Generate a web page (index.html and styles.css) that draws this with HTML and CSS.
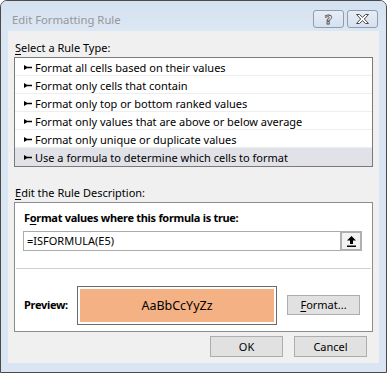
FILE: index.html
```html
<!DOCTYPE html>
<html>
<head>
<meta charset="utf-8">
<link rel="stylesheet" href="styles.css">
</head>
<body>
<div class="window">
  <div class="titlebar">
    <span class="title">Edit Formatting Rule</span>
    <div class="tbtns">
      <div class="tbtn"><span class="qmark">?</span></div>
      <div class="tbtn">
        <svg width="13" height="10" viewBox="0 0 13 10"><polygon points="0.5,0.5 3.5,0.5 6.5,3.3 9.5,0.5 12.5,0.5 8.3,5 12.5,9.5 9.5,9.5 6.5,6.7 3.5,9.5 0.5,9.5 4.7,5" fill="#fff" stroke="#4a4a4a" stroke-width="1" stroke-linejoin="round"/></svg>
      </div>
    </div>
  </div>
  <div class="client">
    <div class="label"><u>S</u>elect a Rule Type:</div>
    <div class="listbox">
      <div class="row"><svg class="arrow" width="8" height="5" viewBox="0 0 8 5"><polygon points="0,0 3,1.8 8,1.8 8,3.2 3,3.2 0,5" fill="#000"/></svg><span>Format all cells based on their values</span></div>
      <div class="row"><svg class="arrow" width="8" height="5" viewBox="0 0 8 5"><polygon points="0,0 3,1.8 8,1.8 8,3.2 3,3.2 0,5" fill="#000"/></svg><span>Format only cells that contain</span></div>
      <div class="row"><svg class="arrow" width="8" height="5" viewBox="0 0 8 5"><polygon points="0,0 3,1.8 8,1.8 8,3.2 3,3.2 0,5" fill="#000"/></svg><span>Format only top or bottom ranked values</span></div>
      <div class="row"><svg class="arrow" width="8" height="5" viewBox="0 0 8 5"><polygon points="0,0 3,1.8 8,1.8 8,3.2 3,3.2 0,5" fill="#000"/></svg><span>Format only values that are above or below average</span></div>
      <div class="row"><svg class="arrow" width="8" height="5" viewBox="0 0 8 5"><polygon points="0,0 3,1.8 8,1.8 8,3.2 3,3.2 0,5" fill="#000"/></svg><span>Format only unique or duplicate values</span></div>
      <div class="row sel"><svg class="arrow" width="8" height="5" viewBox="0 0 8 5"><polygon points="0,0 3,1.8 8,1.8 8,3.2 3,3.2 0,5" fill="#000"/></svg><span>Use a formula to determine which cells to format</span></div>
    </div>
    <div class="label l2"><u>E</u>dit the Rule Description:</div>
    <div class="desc">
      <div class="blabel">F<u>o</u>rmat values where this formula is true:</div>
      <div class="inputrow">
        <div class="input">=ISFORMULA(E5)</div>
        <div class="upbtn">
          <svg width="9" height="11" viewBox="0 0 9 11"><path d="M4.5 0 L9 4.5 H6 V8 H3 V4.5 H0 Z" fill="#000"/><rect x="0" y="9.5" width="9" height="1.5" fill="#000"/></svg>
        </div>
      </div>
      <div class="sep"></div>
      <div class="prow">
        <div class="blabel plabel">Preview:</div>
        <div class="preview"><div class="swatch">AaBbCcYyZz</div></div>
        <div class="btn fmt"><u>F</u>ormat...</div>
      </div>
    </div>
    <div class="footer">
      <div class="btn">OK</div>
      <div class="btn">Cancel</div>
    </div>
  </div>
</div>
</body>
</html>
```
FILE: styles.css
```css
* { box-sizing: border-box; }
html, body { margin: 0; padding: 0; background: #fff; }
body {
  font-family: "Noto Sans", "Open Sans", sans-serif;
  font-size: 11px;
  color: #000;
}
.window {
  width: 387px;
  height: 373px;
  border: 1px solid #4a4a4a;
  border-radius: 7px 7px 0 0;
  background: #d9e5f3;
  display: flex;
  flex-direction: column;
}
.titlebar {
  height: 30px;
  display: flex;
  justify-content: space-between;
  align-items: flex-start;
  padding: 9px 8px 0 11px;
  background: linear-gradient(#d4e1f0, #dce7f4);
  border-radius: 6px 6px 0 0;
}
.title {
  color: #979797;
  font-size: 11.3px;
  line-height: 20px;
}
.tbtns { display: flex; gap: 3px; }
.tbtn {
  width: 31px;
  height: 18px;
  border: 1px solid #8d9cb2;
  border-radius: 3px;
  background: linear-gradient(#e6edf6, #d6e1ee);
  display: flex;
  align-items: center;
  justify-content: center;
}
.qmark {
  font-family: "DejaVu Sans", sans-serif;
  font-weight: bold;
  font-size: 13px;
  line-height: 13px;
  color: #fff;
  -webkit-text-stroke: 0.8px #4a4a4a;
}
.client {
  flex: 1;
  margin: 0 7px 9px 7px;
  background: #f0f0f0;
  padding: 0 6px 0 6px;
  display: flex;
  flex-direction: column;
}
.label {
  line-height: 16px;
  margin-top: 9px;
  padding-left: 1px;
}
.l2 { margin-top: 18px; }
u { text-decoration-thickness: 1px; text-underline-offset: 2px; }
.listbox {
  margin-top: 1px;
  border: 1px solid #7a7a7a;
  background: #fff;
  height: 110px;
}
.row {
  height: 18px;
  display: flex;
  align-items: center;
  padding-left: 9px;
  padding-top: 1px;
  border-bottom: 1px solid #eeeeee;
  white-space: nowrap;
}
.row.sel { background: #e1e1e8; border-bottom: none; }
.arrow { margin-right: 3px; flex: none; }
.desc {
  margin-top: 1px;
  height: 130px;
  border: 1px solid #8c8c8c;
  background: #fff;
  padding: 7px 0 6px 8px;
  display: flex;
  flex-direction: column;
}
.blabel {
  font-weight: bold;
  line-height: 16px;
  padding-left: 1px;
  white-space: nowrap;
  letter-spacing: -0.3px;
}
.inputrow {
  margin-top: 5px;
  display: flex;
  height: 20px;
}
.input {
  width: 317px;
  border: 1px solid #ababab;
  border-right: none;
  line-height: 18px;
  padding-left: 3px;
}
.upbtn {
  width: 22px;
  height: 20px;
  border: 2px solid #b0b0b0;
  background: #f2f2f2;
  display: flex;
  align-items: center;
  justify-content: center;
}
.sep {
  margin: 17px 1px 0 -7px;
  height: 1px;
  background: #cfcfcf;
}
.prow {
  margin-top: 16px;
  height: 40px;
  display: flex;
  align-items: center;
}
.plabel { width: 54px; }
.preview {
  width: 200px;
  height: 39px;
  border: 1px solid #6a6a6a;
  padding: 2px;
  background: #fff;
}
.swatch {
  height: 100%;
  background: #f4b183;
  display: flex;
  align-items: center;
  justify-content: center;
  font-size: 12.5px;
}
.btn {
  width: 73px;
  height: 21px;
  border: 1px solid #adadad;
  background: #e1e1e1;
  display: flex;
  align-items: center;
  justify-content: center;
}
.fmt { margin-left: 10px; height: 20px; margin-top: -1px; }
.footer {
  margin-top: 4px;
  margin-right: 6px;
  display: flex;
  justify-content: flex-end;
  gap: 11px;
}
```
